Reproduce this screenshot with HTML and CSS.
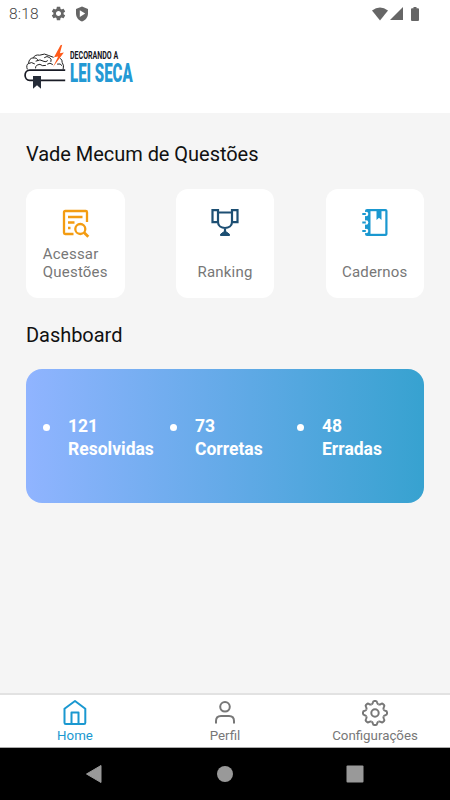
FILE: index.html
```html
<!DOCTYPE html>
<html lang="pt-BR">
<head>
  <meta charset="UTF-8" />
  <meta name="viewport" content="width=device-width, initial-scale=1.0"/>
  <title>Decorando a Lei Seca</title>
  <link rel="stylesheet" href="styles.css">
</head>
<body>
  <div class="status-bar">
    <span class="hora">8:18</span>
    <svg class="status-gear" width="17" height="17" viewBox="0 0 24 24"><path fill-rule="evenodd" d="M19.14 12.94c.04-.3.06-.61.06-.94 0-.32-.02-.64-.07-.94l2.03-1.58c.18-.14.23-.41.12-.61l-1.92-3.32c-.12-.22-.37-.29-.59-.22l-2.39.96c-.5-.38-1.03-.7-1.62-.94l-.36-2.54c-.04-.24-.24-.41-.48-.41h-3.84c-.24 0-.43.17-.47.41l-.36 2.54c-.59.24-1.13.57-1.62.94l-2.39-.96c-.22-.08-.47 0-.59.22L2.74 8.87c-.12.21-.08.47.12.61l2.03 1.58c-.05.3-.09.63-.09.94s.02.64.07.94l-2.03 1.58c-.18.14-.23.41-.12.61l1.92 3.32c.12.22.37.29.59.22l2.39-.96c.5.38 1.03.7 1.62.94l.36 2.54c.05.24.24.41.48.41h3.84c.24 0 .44-.17.47-.41l.36-2.54c.59-.24 1.13-.56 1.62-.94l2.39.96c.22.08.47 0 .59-.22l1.92-3.32c.12-.22.07-.47-.12-.61l-2.01-1.58zM12 15.6c-1.98 0-3.6-1.62-3.6-3.6s1.62-3.6 3.6-3.6 3.6 1.62 3.6 3.6-1.62 3.6-3.6 3.6z"/></svg>
    <svg class="status-shield" width="14" height="16" viewBox="0 0 14 16"><path fill-rule="evenodd" d="M7 .5 13 3v4.500c0 3.700-2.500 6.800-6 8-3.500-1.200-6-4.300-6-8V3zM4.800 4.300v6.600L10.200 7.600z"/></svg>
    <div class="status-direita">
      <svg width="16" height="14" viewBox="0 0 16 14"><path d="M0 3.500Q8-2.500 16 3.500L8 13.500z"/></svg>
      <svg width="13" height="13" viewBox="0 0 13 13"><path d="M0 13 13 0v13z"/></svg>
      <svg class="bateria" width="8" height="14" viewBox="0 0 8 14"><path d="M2.500 0h3v1.300H7q1 0 1 1V13q0 1-1 1H1q-1 0-1-1V2.300q0-1 1-1h1.500z"/></svg>
    </div>
  </div>

  <header class="topo">
    <svg width="47" height="48" viewBox="23 43 47 48">
      <!-- cérebro -->
      <g class="cerebro">
        <path d="M27.200 69q-1.500-4 1.500-6 .2-4.500 4.500-5.200 2-3.600 6.500-2.600 5-2.400 9 .3l4.500 1.700M60.500 58.500q2 1.500 1.700 4 2.300 3 1 6.500"/>
        <path d="M28.500 63.500q3-2.200 6 .2M33.500 58q3.500-.8 4.500 2.500M36 61q4-2.500 8 .4 2 1 3.500-.6M44.500 57.500q2.500-2 5 0 2.500 1.500 1.500 4M35.500 68q0-3.500 4-3.500M40 64.500q2.500 2 5.500 1M47.500 64q2.500-2 5 .3M57.500 64q3-1 4.500 1.500"/>
      </g>
      <path class="raio" d="M60.500 45.200 54 57.200l4.200-.7L53 67l10.900-14.500-4 .7 2.300-8.500z"/>
      <!-- livro -->
      <path class="livro" d="M65.200 70.200H29.800c-6.300 0-6.300 10.200 0 10.200H65.200"/>
      <path class="marcador" d="M33 76h8v12.800l-4-3.500-4 3.500z"/>
    </svg>
    <div class="logo-texto">
      <span class="logo-decorando">DECORANDO A</span>
      <span class="logo-lei">LEI SECA</span>
    </div>
  </header>

  <main class="conteudo">
    <h2>Vade Mecum de Questões</h2>
    <div class="cards">
      <a class="card">
        <svg class="icone-busca" width="28" height="29" viewBox="0 0 28 29" fill="none" stroke="#f39c12" stroke-width="2.300">
          <path d="M11.500 26H3.200q-1.200 0-1.200-1.200V4.200Q2 3 3.200 3h20.600Q25 3 25 4.200V14"/>
          <path d="M6 9h14.500M6 14.500h6.500M6 20h2.500"/>
          <circle cx="18.300" cy="21" r="5"/>
          <path stroke-width="2.800" d="m22 24.500 4.300 4.300"/>
        </svg>
        <span>Acessar<br>Questões</span>
      </a>
      <a class="card">
        <svg width="28" height="29" viewBox="0 0 28 29" fill="none" stroke="#1d4f73" stroke-width="2.200">
          <path d="M7 4.500h14v9.500c0 8-14 8-14 0zM7 2.200H1.500v12H7zM21 2.200h5.500v12H21zM14 19.500V25"/>
          <path fill="#1d4f73" stroke-width="1" d="M9.500 27.500v-1.200L12.500 24h3l3 2.300v1.200z"/>
        </svg>
        <span>Ranking</span>
      </a>
      <a class="card">
        <svg width="28" height="29" viewBox="0 0 28 29">
          <rect x="4" y="1" width="22.500" height="27" rx="2" fill="#1a98d0"/>
          <path d="M9.500 3.200H24.300v22.600H9.500z" fill="#fff"/>
          <path d="M15.500 3h5v9l-2.500-2.200-2.500 2.200z" fill="#1a98d0"/>
          <g fill="#fff"><circle cx="5" cy="6" r="2.300"/><circle cx="5" cy="14.500" r="2.300"/><circle cx="5" cy="23" r="2.300"/></g>
          <path d="M1.300 6h3.500M1.300 14.500h3.500M1.300 23h3.500" stroke="#1a98d0" stroke-width="1.800"/>
        </svg>
        <span>Cadernos</span>
      </a>
    </div>

    <h2>Dashboard</h2>
    <ul class="dashboard">
      <li>121<br>Resolvidas</li>
      <li>73<br>Corretas</li>
      <li>48<br>Erradas</li>
    </ul>
  </main>

  <nav class="abas">
    <a class="aba ativa">
      <svg width="28" height="28" viewBox="0 0 28 28"><path d="M3.500 9.700 14 2l10.300 7.700v14q0 1.300-1.300 1.300H4.800q-1.300 0-1.300-1.300zM10.500 25V13.500h7V25"/></svg>
      <span>Home</span>
    </a>
    <a class="aba">
      <svg width="28" height="28" viewBox="0 0 28 28"><circle cx="14" cy="7.800" r="4.800"/><path d="M5 24.500V22q0-5 5-5h8q5 0 5 5v2.500"/></svg>
      <span>Perfil</span>
    </a>
    <a class="aba">
      <svg width="28" height="28" viewBox="-14 -14 28 28">
        <defs><path id="dente" d="M-3.600-8.700Q-2.500-9-2.200-10.300Q-1.900-12-.8-12H.8Q1.900-12 2.200-10.300Q2.500-9 3.600-8.700"/></defs>
        <use href="#dente"/><use href="#dente" transform="rotate(45)"/><use href="#dente" transform="rotate(90)"/><use href="#dente" transform="rotate(135)"/>
        <use href="#dente" transform="rotate(180)"/><use href="#dente" transform="rotate(225)"/><use href="#dente" transform="rotate(270)"/><use href="#dente" transform="rotate(315)"/>
        <circle r="3.700"/>
      </svg>
      <span>Configurações</span>
    </a>
  </nav>

  <div class="android-nav">
    <svg width="18" height="20" viewBox="0 0 18 20"><path d="M16 1.500v17L1.500 10z" stroke="#999" stroke-linejoin="round"/></svg>
    <svg width="18" height="20" viewBox="0 0 18 20"><circle cx="9" cy="10" r="8"/></svg>
    <svg width="18" height="20" viewBox="0 0 18 20"><rect x=".5" y="1.500" width="17" height="17" rx="1"/></svg>
  </div>
</body>
</html>
```
FILE: styles.css
```css
* {
  box-sizing: border-box;
}

body {
  margin: 0;
  height: 800px;
  display: flex;
  flex-direction: column;
  overflow: hidden;
  background-color: #fff;
  font-family: Roboto, sans-serif;
}

/* Barra de status */
.status-bar {
  height: 27px;
  display: flex;
  align-items: center;
  padding: 0 31px 0 9px;
  color: #666;
  fill: #666;
}

.hora {
  width: 41px;
  font-size: 15.5px;
  font-weight: 300;
  letter-spacing: 0.2px;
  color: #444;
}

.status-shield {
  margin-left: 8px;
}

.status-direita {
  display: flex;
  align-items: center;
  gap: 2px;
  margin-left: auto;
}

.bateria {
  margin-left: 6px;
}

/* Logo */
.topo {
  height: 86px;
  display: flex;
  padding: 16px 0 0 23px;
}

.logo-texto {
  display: flex;
  flex-direction: column;
  align-items: flex-start;
  padding-top: 6px;
  white-space: nowrap;
}

.logo-texto span {
  transform-origin: left center;
}

.cerebro {
  fill: none;
  stroke: #222;
  stroke-width: 1;
  stroke-linecap: round;
}

.raio {
  fill: #ff5a1a;
}

.livro {
  fill: none;
  stroke: #1a1c26;
  stroke-width: 1.7;
}

.marcador {
  fill: #252c38;
}

.logo-decorando {
  font-size: 11px;
  line-height: 13px;
  font-weight: 700;
  color: #15151c;
  transform: scaleX(0.64);
}

.logo-lei {
  font-size: 25px;
  line-height: 23px;
  font-weight: 900;
  color: #2499d4;
  transform: scaleX(0.6);
}

/* Conteudo */
.conteudo {
  flex: 1;
  padding: 28px 26px 0;
  background-color: #f5f5f5;
}

h2 {
  margin: 0;
  height: 26px;
  line-height: 26px;
  font-size: 20px;
  font-weight: 400;
  letter-spacing: -0.04px;
  color: #111;
}

.cards {
  display: flex;
  justify-content: space-between;
  margin: 22px 0 24px;
}

.card {
  width: 98.5px;
  height: 109px;
  padding: 19px 0 17px;
  display: flex;
  flex-direction: column;
  align-items: center;
  justify-content: space-between;
  background-color: #fff;
  border-radius: 12px;
  color: #777;
  font-size: 15px;
  line-height: 18px;
  letter-spacing: 0.2px;
}

.icone-busca {
  overflow: visible;
  margin-left: 2px;
}

.dashboard {
  display: flex;
  height: 134px;
  margin: 21px 0 0;
  padding: 46px 0 0 42px;
  border-radius: 16px;
  background: linear-gradient(to right, #90b4ff, #64aae8 50%, #37a2d0);
  color: #fff;
  font-size: 17.5px;
  font-weight: 700;
  line-height: 23px;
  list-style: none;
}

.dashboard li {
  width: 127px;
  flex-shrink: 0;
}

.dashboard li::before {
  content: "";
  float: left;
  width: 7px;
  height: 7px;
  margin: 8.5px 0 0 -25px;
  border-radius: 50%;
  background-color: #fff;
}

/* Abas */
.abas {
  display: flex;
  height: 55px;
  padding-top: 4px;
  border-top: 2px solid #e2e2e2;
  border-bottom: 1px solid #aaa;
}

.aba {
  flex: 1;
  display: flex;
  flex-direction: column;
  align-items: center;
  color: #777;
  font-size: 13.3px;
  line-height: 17px;
}

.aba svg {
  fill: none;
  stroke: currentColor;
  stroke-width: 2;
  stroke-linejoin: round;
}

.ativa {
  color: #1a98d0;
}

.android-nav {
  display: flex;
  align-items: center;
  justify-content: space-between;
  height: 52px;
  padding: 0 86px 0 85px;
  background-color: #000;
  fill: #999;
}
```
